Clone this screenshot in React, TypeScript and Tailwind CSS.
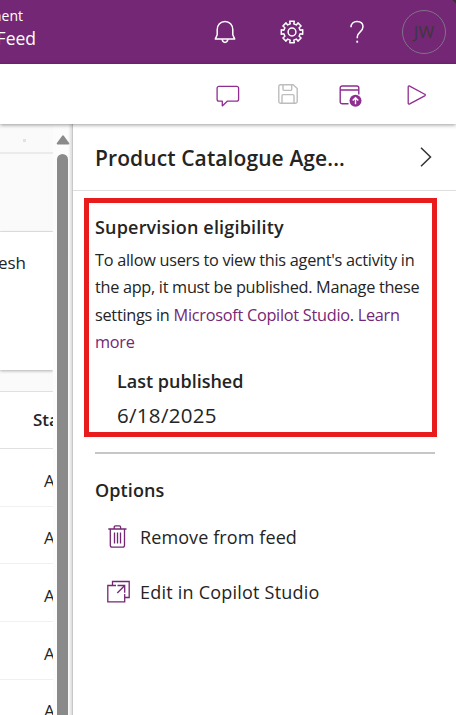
import React from "react";

type IconProps = { className?: string };

const BellIcon = ({ className }: IconProps) => (
  <svg className={className} viewBox="0 0 22 24" fill="none" stroke="currentColor" strokeWidth="1.5" strokeLinejoin="round">
    <path d="M3.2 9.8C3.2 5 6.5 1.500 11 1.500s7.800 3.500 7.800 8.300v5l1.900 4.300H1.300l1.900-4.300v-5Z" />
    <path d="M8.200 19.300c.2 2.100 1.300 3.100 2.800 3.100s2.600-1 2.800-3.100" />
  </svg>
);

const GearIcon = ({ className }: IconProps) => (
  <svg className={className} viewBox="0 0 24 24" fill="none" stroke="currentColor" strokeWidth="1.5" strokeLinejoin="round">
    <path d="M10.200 3.900 9.700 1.300h4.600l-.5 2.600 2.500 1 1.700-2 3.100 3.100-2 1.700 1 2.500 2.600-.5v4.600l-2.600-.5-1 2.500 2 1.700-3.100 3.100-1.700-2-2.500 1 .5 2.600H9.700l.5-2.600-2.500-1-1.700 2L2.900 18l2-1.700-1-2.500-2.600.5V9.700l2.600.5 1-2.500-2-1.700L6 2.900l1.700 2Z" />
    <circle cx="12" cy="12" r="3.900" />
  </svg>
);

const HelpIcon = ({ className }: IconProps) => (
  <svg className={className} viewBox="0 0 14 24" fill="none" stroke="currentColor" strokeWidth="1.5">
    <path d="M1 7.200C1 3.700 3.500 1.500 7 1.500s6 2 6 5.300c0 2.600-1.400 3.900-3 5.300-1.700 1.500-2.700 2.600-2.700 4.700v1.400" />
    <path d="M7.200 20.700v2" strokeWidth="1.800" />
  </svg>
);

const ChatIcon = ({ className }: IconProps) => (
  <svg className={className} viewBox="0 0 24 22" fill="none" stroke="currentColor" strokeWidth="1.300" strokeLinejoin="round">
    <path d="M3 1.300h17.700a1.900 1.900 0 0 1 1.900 1.900v11a1.900 1.900 0 0 1-1.900 1.900h-9.200l-5.200 4.800v-4.800H3a1.900 1.900 0 0 1-1.900-1.900v-11A1.900 1.900 0 0 1 3 1.300Z" />
  </svg>
);

const SaveIcon = ({ className }: IconProps) => (
  <svg className={className} viewBox="0 0 20 20" fill="none" stroke="currentColor" strokeWidth="1.400" strokeLinejoin="round">
    <path d="M2.500.8h12.700l4 3.800v12.900a1.700 1.700 0 0 1-1.700 1.700h-15A1.700 1.700 0 0 1 .8 17.500v-15A1.700 1.700 0 0 1 2.500.8Z" />
    <path d="M5 1v4.200c0 .7.500 1.200 1.200 1.200h6.300c.7 0 1.200-.5 1.200-1.200V1M4 19v-7.200c0-.7.500-1.200 1.200-1.200h9.600c.7 0 1.200.5 1.200 1.200V19" />
  </svg>
);

const PublishIcon = ({ className }: IconProps) => (
  <svg className={className} viewBox="0 0 24 22" fill="none" stroke="currentColor" strokeWidth="1.400">
    <path d="M9.500 18.800H3.200a2 2 0 0 1-2-2V3a2 2 0 0 1 2-2h14.600a2 2 0 0 1 2 2v6.500M1.200 5h18.600" />
    <circle cx="16.500" cy="15.800" r="6" fill="currentColor" stroke="none" />
    <path d="M16.500 19.300V13M13.700 15.500l2.800-2.800 2.800 2.800" stroke="white" />
  </svg>
);

const PlayIcon = ({ className }: IconProps) => (
  <svg className={className} viewBox="0 0 20 20" fill="none" stroke="currentColor" strokeWidth="1.300" strokeLinejoin="round">
    <path d="M1.200 2v16c0 1 .7 1.300 1.500.9l15-8c.8-.5.800-1.300 0-1.700L2.700 1.100C1.900.7 1.200 1 1.200 2Z" />
  </svg>
);

const TrashIcon = ({ className }: IconProps) => (
  <svg className={className} viewBox="0 0 19 23" fill="none" stroke="currentColor" strokeWidth="1.300">
    <path d="M.3 4h18.200M6.200 4V2.200c0-.8.500-1.300 1.300-1.300h3.800c.8 0 1.300.5 1.300 1.300V4M2.300 4v16.200c0 1.200.7 1.900 1.900 1.900h10.400c1.200 0 1.900-.7 1.900-1.900V4" />
    <path d="M6.500 7.500V18.500M9.500 7.500V18.500M12.500 7.500V18.500" />
  </svg>
);

const OpenIcon = ({ className }: IconProps) => (
  <svg className={className} viewBox="0 0 23 23" fill="none" stroke="currentColor" strokeWidth="1.300">
    <path d="M5.500 5.500v-4h16.700v16h-4.500" />
    <path d="M9 5.500H.8v16.300h16.900V14M10.500 5.500h7.200v7.200M17.500 5.800l-7.200 7.200" />
  </svg>
);

const rows = ["Active", "Active", "Active", "Active", "Active"];

function Header() {
  return (
    <header className="flex h-16 shrink-0 bg-[#742774] bg-[linear-gradient(225deg,#3a3038_2px,transparent_3px)] text-white">
      <div className="flex w-[213px] flex-col">
        <span className="-ml-[97px] mt-[5px] w-[120px] text-right text-[14px] leading-[22px]">Environment</span>
        <span className="-ml-[84px] w-[120px] text-right text-[17.5px] leading-[23px] whitespace-nowrap">Agent Feed</span>
      </div>
      <div className="flex items-center">
        <BellIcon className="h-6 w-6" />
        <GearIcon className="ml-[43px] h-6 w-6" />
        <HelpIcon className="ml-[46px] h-6 w-[14px]" />
        <div className="ml-[38px] flex h-11 w-11 shrink-0 items-center justify-center rounded-full border border-[#81718a] text-[17px] text-[#3c373d]">JW</div>
      </div>
    </header>
  );
}

function Toolbar() {
  return (
    <div className="z-10 flex h-[60px] shrink-0 items-center bg-white pl-[216px] text-[#8f2d91] shadow-[0_1px_4px_rgba(0,0,0,0.4)]">
      <ChatIcon className="mt-[3px] h-[22px] w-6" />
      <SaveIcon className="ml-[38px] h-5 w-5 text-[#bdbdbd]" />
      <PublishIcon className="mt-[3px] ml-[41px] h-[22px] w-6" />
      <PlayIcon className="mt-[2px] ml-[44px] h-5 w-5" />
    </div>
  );
}

function FeedList() {
  return (
    <div className="flex w-[53px] shrink-0 flex-col overflow-hidden bg-[#fafafa] text-[17px] whitespace-nowrap text-[#242424]">
      <div className="flex h-[30px] shrink-0 items-center border-b-2 border-[#ebebeb] pt-1 pl-[23px]">
        <span className="h-[3px] w-[3px] bg-[#e2e2e2]" />
      </div>
      <div className="h-[78px] shrink-0 border-b border-[#e6e6e6]" />
      <div className="h-[138px] shrink-0 bg-white pt-[18px] shadow-[0_1px_3px_rgba(0,0,0,0.3)]">
        <div className="-ml-[42px] w-[68px] text-right leading-[26px]">Refresh</div>
      </div>
      <div className="h-[21px] shrink-0" />
      <div className="flex h-[58px] shrink-0 items-center border-t border-b border-[#e0e0e0] bg-white pl-[33px] font-semibold">Status</div>
      {rows.map((label, i) => (
        <div key={i} className="flex h-[57.7px] shrink-0 items-center border-b border-[#f0f0f0] bg-white pt-[6px] pl-[44px]">{label}</div>
      ))}
    </div>
  );
}

function Scrollbar() {
  return (
    <div className="flex w-5 shrink-0 flex-col items-center border-r border-[#c8c8c8] bg-gradient-to-r from-[#fcfcfc] from-80% to-[#dcdcdc] pt-[11px]">
      <svg className="h-[10px] w-[14px] shrink-0" viewBox="0 0 14 10"><path d="M6.200.8q.8-.9 1.600 0l5.300 7.300q.7 1.400-.8 1.400H1.700Q.2 9.500.9 8.100Z" fill="#8a8a8a" /></svg>
      <div className="mt-[9px] w-[11px] flex-1 rounded-t-full bg-[#8a8a8a]" />
    </div>
  );
}

function DetailsPanel() {
  return (
    <aside className="flex min-w-0 flex-1 flex-col bg-white text-[#242424]">
      <div className="flex h-[67px] shrink-0 items-center justify-between border-b border-[#dedede] pr-[24px] pl-[22px]">
        <h1 className="pt-[3px] text-[21px] font-semibold tracking-[0.1px] whitespace-nowrap">Product Catalogue Age...</h1>
        <svg className="h-[20px] w-[12px]" viewBox="0 0 12 20" fill="none" stroke="#333" strokeWidth="1.500"><path d="m1 .8 9.500 9.200L1 19.200" /></svg>
      </div>
      <section className="mt-[7px] ml-[11px] h-[239px] w-[353px] shrink-0 border-[5px] border-[#e81c1c] pt-[12px] pl-[6px] whitespace-nowrap">
        <h2 className="text-[18px] leading-[24px] font-semibold tracking-[0.18px]">Supervision eligibility</h2>
        <div className="mt-[8px] text-[16.300px] leading-[27.400px] tracking-[-0.270px]">
          <p>To allow users to view this agent's activity in</p>
          <p className="tracking-[-0.300px]">the app, it must be published. Manage these</p>
          <p>settings in <a className="text-[#742774]">Microsoft Copilot Studio</a>. <a className="text-[#742774]">Learn</a></p>
          <p className="text-[#742774]">more</p>
        </div>
        <div className="mt-[12px] pl-[22px]">
          <h3 className="text-[18px] leading-[24px] font-semibold">Last published</h3>
          <p className="mt-[8px] text-[20.500px] leading-[28px] tracking-[0.300px]">6/18/2025</p>
        </div>
      </section>
      <hr className="mt-[15px] ml-[22px] w-[340px] border-t-2 border-[#c6c6c6]" />
      <section className="pt-[24px] pl-[22px] whitespace-nowrap">
        <h2 className="text-[18px] leading-[24px] font-semibold tracking-[0.1px]">Options</h2>
        <div className="mt-[20px] flex h-[30px] items-center text-[18px] tracking-[0.1px]">
          <div className="-mt-[2px] flex w-[45px] pl-[12.500px] text-[#742774]"><TrashIcon className="h-[23px] w-[19px]" /></div>
          <span>Remove from feed</span>
        </div>
        <div className="mt-[25px] flex h-[30px] items-center text-[18px] tracking-[0.22px]">
          <div className="-mt-[2px] flex w-[45px] pl-[12px] text-[#742774]"><OpenIcon className="h-[23px] w-[23px]" /></div>
          <span>Edit in Copilot Studio</span>
        </div>
      </section>
    </aside>
  );
}

export default function App() {
  return (
    <div className="flex h-[715px] w-[456px] flex-col overflow-hidden bg-white font-['Open_Sans','Noto_Sans',sans-serif]">
      <Header />
      <Toolbar />
      <main className="flex min-h-0 flex-1">
        <FeedList />
        <Scrollbar />
        <DetailsPanel />
      </main>
    </div>
  );
}
